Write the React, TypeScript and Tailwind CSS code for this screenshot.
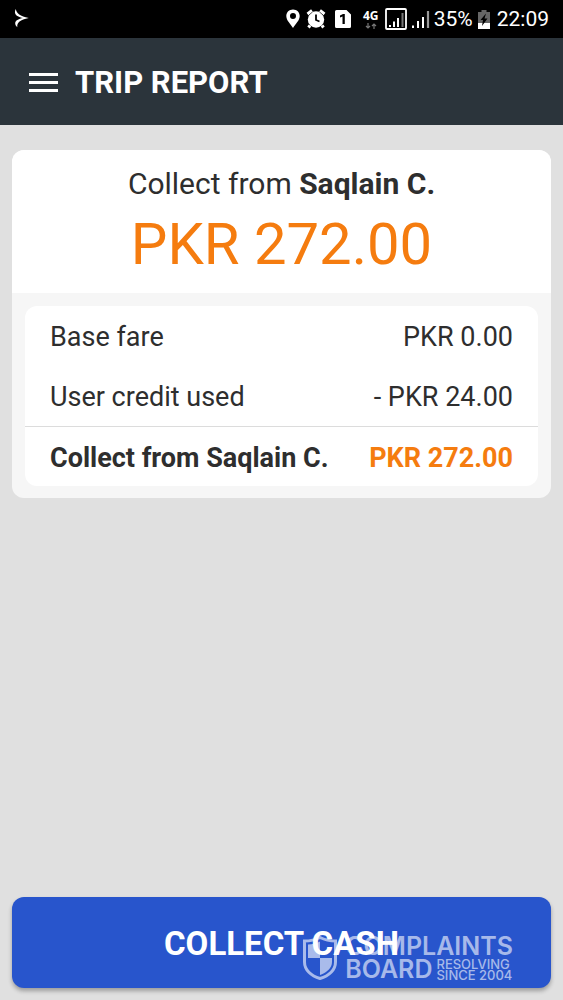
import React from "react";

function StatusBar() {
  return (
    <div className="flex h-[38px] shrink-0 items-center justify-between bg-black pl-[14px] pr-[14px] text-white">
      <svg className="h-5 w-4" viewBox="0 0 16 20" fill="currentColor" aria-hidden="true">
        <path d="M1.800 0C2.500 4.500 6 7 14.800 9C6 11 2.800 13.500 3.300 18.300C0.800 16 0.500 13 2.800 11.300C5 10 7 9.400 9 9C7 8.600 5 8 2.800 6.700C0.500 5 0.500 2.500 1.800 0Z" />
      </svg>
      <div className="flex items-center">
        <svg className="h-5 w-[14px]" viewBox="0 0 14 20" aria-label="Location" role="img">
          <path
            fill="currentColor"
            fillRule="evenodd"
            d="M7 0.500C3.200 0.500 0.300 3.300 0.300 7C0.300 11.300 4.500 15 7 19C9.500 15 13.700 11.300 13.700 7C13.700 3.300 10.800 0.500 7 0.500ZM7 4A3 3 0 1 1 7 10A3 3 0 1 1 7 4Z"
          />
        </svg>
        <svg className="ml-[6px] h-5 w-5" viewBox="0 0 20 20" aria-label="Alarm" role="img">
          <circle cx="10" cy="10.500" r="8.200" fill="currentColor" />
          <path d="M1.500 5L6 1.500M18.500 5L14 1.500M4 16.500L2.500 18.500M16 16.500L17.500 18.500" stroke="currentColor" strokeWidth="3" />
          <path d="M10 5.500V11L13.500 12.500" stroke="black" strokeWidth="1.800" fill="none" />
          <path d="M3 6L6.500 3M17 6L13.500 3" stroke="black" strokeWidth="0.600" />
        </svg>
        <svg className="ml-[9px] h-[18px] w-4" viewBox="0 0 16 18" aria-label="SIM 1" role="img">
          <path
            fill="currentColor"
            fillRule="evenodd"
            d="M1.500 0H11.500L16 4.500V16.500Q16 18 14.500 18H1.500Q0 18 0 16.500V1.500Q0 0 1.500 0ZM5 5.500V7.500L7.500 6.500V14H9.800V4H8Z"
          />
        </svg>
        <span className="ml-3 flex w-4 flex-col items-center font-['Noto_Sans',sans-serif] text-[12px] leading-[12px] font-bold">
          4G
          <svg className="mt-px h-[6px] w-3" viewBox="0 0 12 6" fill="none" stroke="#777" strokeWidth="1.200" aria-hidden="true">
            <path d="M3 0V5M1 3L3 5L5 3M9 6V1M7 3L9 1L11 3" />
          </svg>
        </span>
        <svg className="ml-[6px] h-[22px] w-[22px]" viewBox="0 0 22 22" fill="none" aria-label="Signal, SIM 1" role="img">
          <rect x="1" y="1" width="20" height="20" rx="1" stroke="currentColor" strokeWidth="1.800" />
          <path d="M5 19V17M9 19V13.500M13 19V10" stroke="currentColor" strokeWidth="2" />
          <path d="M17.500 19V5" stroke="#777" strokeWidth="2" />
        </svg>
        <svg className="ml-1 h-5 w-5" viewBox="0 0 20 20" fill="none" aria-label="Signal, SIM 2" role="img">
          <path d="M2 19V16.500M7 19V12M12 19V8" stroke="currentColor" strokeWidth="2" />
          <path d="M17 19V2" stroke="#999" strokeWidth="2.200" />
        </svg>
        <span className="ml-[3px] text-[21px] leading-6">35%</span>
        <svg className="ml-[5px] h-[19px] w-3" viewBox="0 0 12 19" aria-label="Battery charging" role="img">
          <path d="M3.500 0H8.500V2H12V19H0V2H3.500Z" fill="#666" />
          <path d="M0 13H12V19H0Z" fill="currentColor" />
          <path d="M8 3.500L2.500 10H5L4 16L9.500 8.500H6.500Z" fill="black" />
        </svg>
        <time className="ml-[7px] text-[21px] leading-6">22:09</time>
      </div>
    </div>
  );
}

function Watermark() {
  return (
    <div className="pointer-events-none absolute right-[38px] bottom-[7px] flex items-center gap-2 font-['Inter',sans-serif] font-semibold text-white/60">
      <svg className="h-[44px] w-[34px]" viewBox="0 0 34 44" aria-hidden="true">
        <path
          d="M17 1.500C12 4 7 5 1.500 5V26C1.500 34 8 40 17 42.500C26 40 32.500 34 32.500 26V5C27 5 22 4 17 1.500Z"
          fill="none"
          stroke="currentColor"
          strokeWidth="3"
        />
        <path d="M17 5.500V22H5V8.500C9.500 8.300 13.500 7.300 17 5.500Z" fill="currentColor" />
        <path d="M17 22H29V26C29 32 24 36.500 17 39Z" fill="currentColor" />
      </svg>
      <div>
        <div className="text-[25px] leading-[23px]">COMPLAINTS</div>
        <div className="flex items-center gap-1">
          <span className="text-[25px] leading-[23px]">BOARD</span>
          <span className="text-[13px] leading-[11px] font-medium">
            RESOLVING
            <br />
            SINCE 2004
          </span>
        </div>
      </div>
    </div>
  );
}

const fares = [
  { label: "Base fare", amount: "PKR 0.00" },
  { label: "User credit used", amount: "- PKR 24.00" },
];

export default function App() {
  return (
    <div className="flex min-h-screen flex-col bg-[#e0e0e0] font-['Roboto',sans-serif] text-[#2e2e2e]">
      <StatusBar />
      <header className="flex h-[87px] shrink-0 items-center bg-[#2b343b] px-[29px] pt-[2px] text-white">
        <button type="button" aria-label="Open menu" className="flex w-[29px] flex-col gap-[5px]">
          <span className="h-[3px] w-full bg-white" />
          <span className="h-[3px] w-full bg-white" />
          <span className="h-[3px] w-full bg-white" />
        </button>
        <h1 className="ml-[17px] text-[31px] leading-9 font-bold">TRIP REPORT</h1>
      </header>

      <main className="flex grow flex-col px-3 pt-[25px] pb-3">
        <section className="overflow-hidden rounded-xl bg-[#f6f6f6]">
          <div className="h-[143px] bg-white pt-4 text-center">
            <p className="text-[30px] leading-9">
              Collect from <b>Saqlain C.</b>
            </p>
            <p className="mt-2 text-[58px] leading-[68px] text-[#f57c0f]">PKR 272.00</p>
          </div>
          <div className="px-[13px] pt-[13px] pb-3">
            <table className="w-full border-separate border-spacing-0 rounded-xl bg-white text-[27px] leading-8">
              <tbody>
                {fares.map((fare) => (
                  <tr key={fare.label} className="h-[60px]">
                    <th scope="row" className="pt-[2px] pl-[25px] text-left font-normal">
                      {fare.label}
                    </th>
                    <td className="pt-[2px] pr-[25px] text-right">{fare.amount}</td>
                  </tr>
                ))}
              </tbody>
              <tfoot>
                <tr className="h-[60px] font-bold">
                  <th scope="row" className="border-t border-[#dcdcdc] pt-[2px] pl-[25px] text-left">
                    Collect from Saqlain C.
                  </th>
                  <td className="border-t border-[#dcdcdc] pt-[2px] pr-[25px] text-right text-[#f57c0f]">
                    PKR 272.00
                  </td>
                </tr>
              </tfoot>
            </table>
          </div>
        </section>

        <div className="relative mt-auto">
          <button
            type="button"
            className="h-[91px] w-full rounded-xl bg-[#2855cc] pt-[2px] text-[33px] leading-10 font-bold text-white shadow-[0_3px_4px_rgba(0,0,0,0.3)]"
          >
            COLLECT CASH
          </button>
          <Watermark />
        </div>
      </main>
    </div>
  );
}
